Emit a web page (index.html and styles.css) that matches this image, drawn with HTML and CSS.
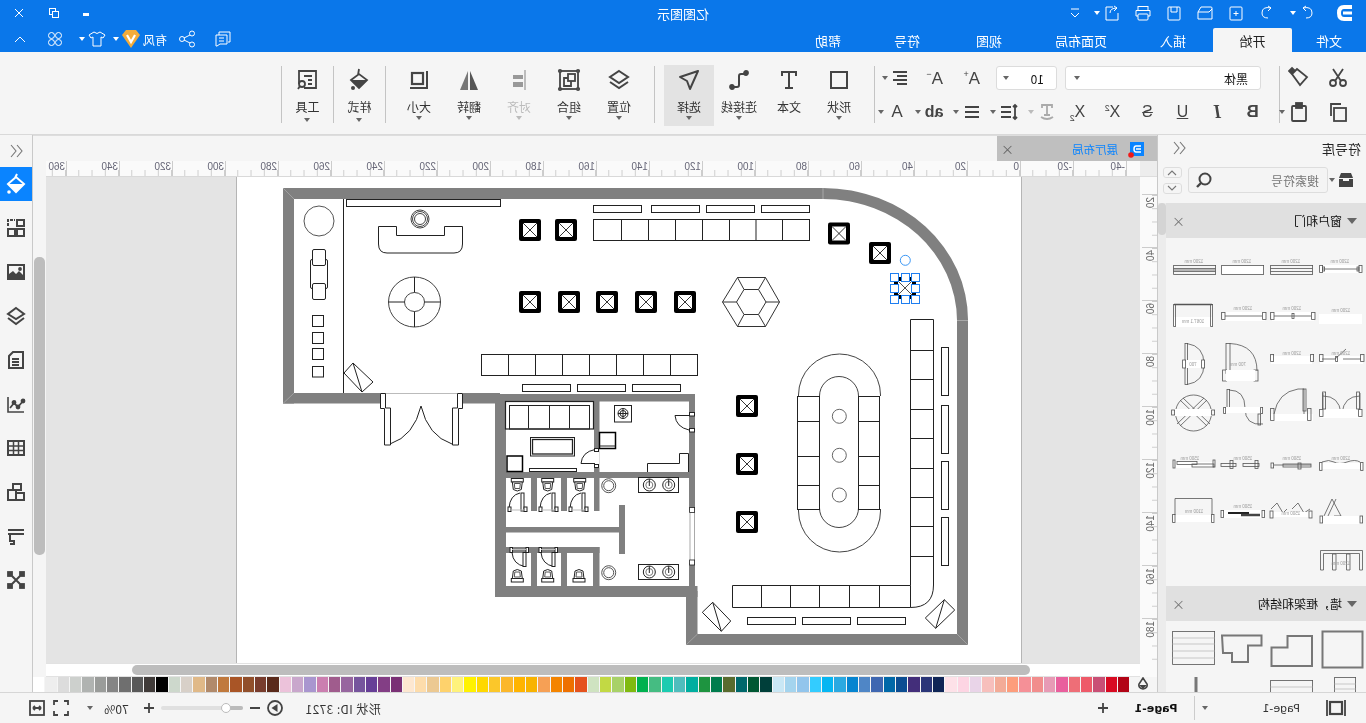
FILE: index.html
```html
<!DOCTYPE html>
<html lang="zh">
<head>
<meta charset="utf-8">
<title>亿图图示</title>
<link rel="stylesheet" href="styles.css">
</head>
<body>
<div class="app">

<header class="titlebar">
  <div class="qa">
    <svg class="ico logo" width="22" height="22" viewBox="0 0 22 22"><path d="M18 3H10Q3 3 3 11T10 19H18V15H10Q7 15 7 11T10 7H18Z" fill="#fff"/><rect x="9" y="9.500" width="9" height="3" fill="#fff"/></svg>
    <svg class="ico wh a1" width="16" height="16" viewBox="0 0 16 16"><path d="M4 3Q13 1 13 8Q13 13 7 13M4 3L7 1M4 3L7 6"/></svg>
    <i class="caret w"></i>
    <svg class="ico wh a2" width="16" height="16" viewBox="0 0 16 16"><path d="M12 3Q3 1 3 8Q3 13 9 13M12 3L9 1M12 3L9 6"/></svg>
    <svg class="ico wh a3" width="16" height="16" viewBox="0 0 16 16"><rect x="2" y="2" width="12" height="13" rx="1"/><path d="M5.500 8.500H10.500M8 6V11"/></svg>
    <svg class="ico wh a3" width="16" height="16" viewBox="0 0 16 16"><path d="M1 14V7L4 2H14Q15 2 15 3V14ZM1 7H12L15 4"/></svg>
    <svg class="ico wh a3" width="16" height="16" viewBox="0 0 16 16"><rect x="2" y="2" width="12" height="13" rx="1"/><path d="M5 2V7H11V2"/></svg>
    <svg class="ico wh a3" width="16" height="16" viewBox="0 0 16 16"><rect x="3" y="1.500" width="10" height="4"/><path d="M3 11H1V5.500H15V11H13"/><rect x="3" y="9" width="10" height="6" rx="1"/></svg>
    <svg class="ico wh a3" width="16" height="16" viewBox="0 0 16 16"><path d="M9 2H2V15H14V8M6 8Q6 3 13 3M13 3L10 1M13 3L10 6"/></svg>
    <i class="caret w"></i>
    <svg class="ico wh a4" width="14" height="14" viewBox="0 0 14 14"><path d="M3 3H11M3 7L7 11L11 7"/></svg>
  </div>
  <div class="apptitle">亿图图示</div>
  <div class="winctl">
    <span class="minbtn"></span>
    <svg class="ico wh" width="12" height="12" viewBox="0 0 12 12"><rect x="1.500" y="1.500" width="6" height="6"/><rect x="4.500" y="4.500" width="6" height="6" fill="#0a77ea"/></svg>
    <svg class="ico wh" width="12" height="12" viewBox="0 0 12 12"><path d="M2 2L10 10M10 2L2 10"/></svg>
  </div>
</header>

<nav class="menubar">
  <a class="tab t74">文件</a>
  <a class="tab t79 on">开始</a>
  <a class="tab t80">插入</a>
  <a class="tab t104">页面布局</a>
  <a class="tab t80">视图</a>
  <a class="tab t84">符号</a>
  <a class="tab t74">帮助</a>
  <div class="menuright">
    <svg class="ico wh" width="18" height="18" viewBox="0 0 18 18"><path d="M5 5V2H16V12H14M2 5H13V14H6L3 16H2Z"/><path d="M5 8H10M5 11H10"/></svg>
    <svg class="ico wh m1" width="18" height="18" viewBox="0 0 18 18"><circle cx="4" cy="9" r="2.500"/><circle cx="14" cy="3.500" r="2.500"/><circle cx="14" cy="14.500" r="2.500"/><path d="M6 8L12 5M6 10L12 13"/></svg>
    <span class="vipname">有风</span>
    <svg class="ico gem" width="20" height="20" viewBox="0 0 20 20"><path d="M1 6L5 1H15L19 6L10 19Z" fill="#f4ac3a"/><path d="M6 6L10 13L14 6" fill="none" stroke="#fff" stroke-width="2.200"/></svg>
    <i class="caret w m2"></i>
    <svg class="ico wh m3" width="18" height="18" viewBox="0 0 18 18"><path d="M6 2L1 5L3 8L5 7V16H13V7L15 8L17 5L12 2Q9 5 6 2Z"/></svg>
    <i class="caret w m4"></i>
    <svg class="ico wh m5" width="16" height="16" viewBox="0 0 16 16"><circle cx="4.500" cy="4.500" r="3"/><circle cx="11.500" cy="4.500" r="3"/><circle cx="4.500" cy="11.500" r="3"/><circle cx="11.500" cy="11.500" r="3"/></svg>
    <svg class="ico wh m6" width="14" height="14" viewBox="0 0 14 14"><path d="M2 10L7 5L12 10"/></svg>
  </div>
</nav>

<section class="ribbon">
  <div class="grp clip">
    <svg class="ico dk" width="22" height="22" viewBox="0 0 22 22"><circle cx="6" cy="17" r="3"/><circle cx="16" cy="17" r="3"/><path d="M8 15L16 3M14 15L6 3"/></svg>
    <svg class="ico dk" width="22" height="22" viewBox="0 0 22 22"><path d="M4 8L9 3L19 11L12 19Z"/><path d="M4 8L1 5L4 2L7 5" fill="#444"/></svg>
    <svg class="ico dk" width="22" height="22" viewBox="0 0 22 22"><rect x="7" y="7" width="12" height="13"/><path d="M4 15V3H14"/></svg>
    <div class="pastecell">
      <svg class="ico dk" width="22" height="22" viewBox="0 0 22 22"><rect x="4" y="5" width="14" height="15" rx="1"/><rect x="8" y="2" width="6" height="5" fill="#444"/></svg>
      <i class="caret"></i>
    </div>
  </div>

  <div class="grp font">
    <div class="frow">
      <div class="select fontsel"><span>黑体</span><i class="caret"></i></div>
      <div class="select sizesel"><span>10</span><i class="caret"></i></div>
      <span class="glyph big p1">A<sup>+</sup></span>
      <span class="glyph big p2">A<sup>−</sup></span>
      <svg class="ico dk p3" width="18" height="18" viewBox="0 0 18 18"><path d="M2 3H16M6 7H16M2 11H16M6 15H16"/></svg>
      <i class="caret p4"></i>
    </div>
    <div class="frow second">
      <span class="fi"><b class="glyph bold">B</b></span>
      <span class="fi"><em class="glyph ital">I</em></span>
      <span class="fi"><span class="glyph under">U</span></span>
      <span class="fi"><span class="glyph strike">S</span></span>
      <span class="fi"><span class="glyph">X<sup>2</sup></span></span>
      <span class="fi"><span class="glyph">X<sub>2</sub></span></span>
      <span class="fc"><svg class="ico lt" width="18" height="18" viewBox="0 0 18 18"><path d="M4 5V2H14V5M9 2V12M6 12H12M3 14Q9 18 15 14"/></svg><i class="caret lt2"></i></span>
      <span class="fc"><svg class="ico dk" width="18" height="18" viewBox="0 0 18 18"><path d="M1 4H11M1 9H11M1 14H11M15 2V16M13 4L15 2L17 4M13 14L15 16L17 14"/></svg><i class="caret"></i></span>
      <span class="fc"><svg class="ico dk" width="18" height="18" viewBox="0 0 18 18"><path d="M2 4H16M2 9H16M2 14H16"/></svg><i class="caret"></i></span>
      <span class="fc"><span class="glyph ab">ab</span><i class="caret"></i></span>
      <span class="fc"><span class="glyph big ac">A</span><i class="caret"></i></span>
    </div>
  </div>

  <div class="grp tools">
    <div class="tool"><svg class="ico dk" width="24" height="24" viewBox="0 0 24 24"><rect x="4" y="4" width="16" height="16" stroke-width="2"/></svg><span>形状</span><i class="caret"></i></div>
    <div class="tool"><svg class="ico dk" width="24" height="24" viewBox="0 0 24 24"><path d="M5 8V4H19V8M12 4V20M8 20H16" stroke-width="2"/></svg><span>文本</span></div>
    <div class="tool"><svg class="ico dk" width="24" height="24" viewBox="0 0 24 24"><path d="M6 19H10Q12 19 12 17V8Q12 6 14 6H17" stroke-width="2"/><circle cx="5" cy="19" r="2" fill="#444"/><circle cx="19" cy="5" r="2" fill="#444"/></svg><span>连接线</span><i class="caret"></i></div>
    <div class="tool active"><svg class="ico dk" width="24" height="24" viewBox="0 0 24 24"><path d="M21 3L3 9L10 13L13 21Z" stroke-width="2" stroke-linejoin="round"/></svg><span>选择</span><i class="caret"></i></div>
  </div>

  <div class="grp tools second-tools">
    <div class="tool"><svg class="ico dk" width="24" height="24" viewBox="0 0 24 24"><path d="M12 3L21 9L12 15L3 9Z" stroke-width="2"/><path d="M3 14L12 20L21 14" stroke-width="2"/></svg><span>位置</span><i class="caret"></i></div>
    <div class="tool"><svg class="ico dk" width="24" height="24" viewBox="0 0 24 24"><rect x="3" y="3" width="18" height="18"/><rect x="11" y="6" width="7" height="7"/><path d="M11 10H7V18H14V13"/><circle cx="3" cy="3" r="1.200" fill="#fff"/><circle cx="21" cy="3" r="1.200" fill="#fff"/><circle cx="3" cy="21" r="1.200" fill="#fff"/><circle cx="21" cy="21" r="1.200" fill="#fff"/></svg><span>组合</span><i class="caret"></i></div>
    <div class="tool off"><svg class="ico" width="24" height="24" viewBox="0 0 24 24"><path d="M18 2V22" stroke="#aaa" stroke-width="1.500"/><rect x="6" y="7" width="10" height="4" fill="#999"/><rect x="6" y="14" width="10" height="5" fill="#999"/></svg><span>对齐</span><i class="caret lt2"></i></div>
    <div class="tool"><svg class="ico" width="24" height="24" viewBox="0 0 24 24"><path d="M11 3V22H3Z" fill="#777"/><path d="M13 3V22H21Z" fill="#555"/></svg><span>翻转</span><i class="caret"></i></div>
    <div class="tool"><svg class="ico dk" width="24" height="24" viewBox="0 0 24 24"><rect x="5" y="5" width="11" height="11" stroke-width="2.200"/><path d="M20 3V20H3" stroke-width="2"/></svg><span>大小</span><i class="caret"></i></div>
  </div>

  <div class="grp single">
    <div class="tool"><svg class="ico" width="24" height="24" viewBox="0 0 24 24"><path d="M12 1L11 7M4 12L12 6L20 12L12 20Z" fill="none" stroke="#444" stroke-width="1.800"/><path d="M4 12H20L12 20Z" fill="#444"/><circle cx="6" cy="20" r="2" fill="#444"/></svg><span>样式</span><i class="caret"></i></div>
  </div>
  <div class="grp single">
    <div class="tool"><svg class="ico dk" width="24" height="24" viewBox="0 0 24 24"><path d="M4 16V3H21V20H9"/><path d="M9 8H17M13 12H17M13 16H17"/><circle cx="7" cy="16" r="3"/><path d="M5 18L3 21"/></svg><span>工具</span><i class="caret"></i></div>
  </div>
</section>

<main class="main">

  <aside class="panel">
    <div class="panelhead">
      <span class="paneltitle">符号库</span>
      <svg class="ico dim-i" width="14" height="14" viewBox="0 0 14 14"><path d="M8 1L13 7L8 13M2 1L7 7L2 13"/></svg>
    </div>
    <div class="searchrow">
      <svg class="ico" width="16" height="14" viewBox="0 0 16 14"><path d="M3 0H13L15 5H1Z" fill="#444"/><path d="M1 6H5V8H11V6H15V14H1Z" fill="#444"/></svg>
      <i class="caret s1"></i>
      <div class="searchbox"><span>搜索符号</span>
        <svg class="ico dk" width="18" height="18" viewBox="0 0 18 18"><circle cx="10" cy="8" r="5.500" stroke-width="2"/><path d="M6 12L2 16" stroke-width="2.400"/></svg>
      </div>
      <div class="updown">
        <button class="ub"><svg width="12" height="7" viewBox="0 0 12 7" class="ico dim-i"><path d="M2 6L6 2L10 6"/></svg></button>
        <button class="ub"><svg width="12" height="7" viewBox="0 0 12 7" class="ico dim-i"><path d="M2 1L6 5L10 1"/></svg></button>
      </div>
    </div>
    <div class="libwrap">
      <div class="libs">
        <div class="libhead"><i class="tri"></i><span>窗户和门</span><em class="libx">×</em></div>
        <div class="libgrid">
          <svg class="ico sh" width="49" height="48" viewBox="0 0 49 48"><rect x="3" y="21" width="42" height="8" fill="#fff" stroke="none"/><path d="M6 25H42"/><rect x="2.500" y="21.500" width="3" height="7"/><rect x="5.500" y="23" width="2" height="4"/><rect x="42" y="21.500" width="3" height="7"/><rect x="40" y="23" width="2" height="4"/><text class="dimt" transform="translate(23,19) scale(-1,1)">1200 mm</text></svg>
          <svg class="ico sh" width="49" height="48" viewBox="0 0 49 48"><rect x="2.500" y="21.500" width="42" height="9"/><path d="M2.500 24.500H44.500M2.500 27.500H44.500"/><text class="dimt" transform="translate(23,19) scale(-1,1)">1200 mm</text></svg>
          <svg class="ico sh" width="49" height="48" viewBox="0 0 49 48"><rect x="2.500" y="21.500" width="42" height="9" fill="#fff"/><text class="dimt" transform="translate(23,19) scale(-1,1)">1200 mm</text></svg>
          <svg class="ico sh" width="49" height="48" viewBox="0 0 49 48"><rect x="3.500" y="21.500" width="42" height="9"/><path d="M3.500 24.500H45.500M3.500 26H45.500M3.500 27.500H45.500"/><text class="dimt" transform="translate(24,19) scale(-1,1)">1200 mm</text></svg>

          <svg class="ico sh" width="49" height="48" viewBox="0 0 49 48"><rect x="2" y="22" width="43" height="10" fill="#fff" stroke="none"/><text class="dimt" transform="translate(24,20) scale(-1,1)">1200 mm</text></svg>
          <svg class="ico sh" width="49" height="48" viewBox="0 0 49 48"><rect x="4" y="20" width="42" height="9" fill="#fff" stroke="none"/><path d="M6 24H43"/><rect x="2.500" y="20.500" width="3.500" height="7"/><rect x="24" y="21.500" width="2" height="5"/><rect x="43.500" y="20.500" width="3.500" height="7"/><text class="dimt" transform="translate(24,18) scale(-1,1)">1200 mm</text></svg>
          <svg class="ico sh" width="49" height="48" viewBox="0 0 49 48"><rect x="4" y="20" width="42" height="9" fill="#fff" stroke="none"/><path d="M6 24H43"/><rect x="2.500" y="20.500" width="3.500" height="7"/><rect x="43.500" y="20.500" width="3.500" height="7"/><text class="dimt" transform="translate(24,18) scale(-1,1)">1200 mm</text></svg>
          <svg class="ico sh" width="49" height="48" viewBox="0 0 49 48"><rect x="4" y="25" width="38" height="10" fill="#fff" stroke="none"/><path d="M4 12.500H42" stroke-width="1.500"/><rect x="3.500" y="12.500" width="2" height="22"/><rect x="40.500" y="12.500" width="2" height="22"/><text class="dimt" transform="translate(23,31) scale(-1,1)">1067.1 mm</text></svg>

          <svg class="ico sh" width="49" height="48" viewBox="0 0 49 48"><rect x="3" y="16" width="43" height="8" fill="#fff" stroke="none"/><path d="M5 19H18L29 9M26 19H44"/><rect x="2.500" y="14.500" width="3.500" height="7"/><rect x="18.500" y="16.500" width="2" height="5"/><rect x="43.500" y="14.500" width="3.500" height="7"/><text class="dimt" transform="translate(24,15) scale(-1,1)">1200 mm</text></svg>
          <svg class="ico sh" width="49" height="48" viewBox="0 0 49 48"><rect x="3" y="16" width="41" height="8" fill="#fff" stroke="none"/><rect x="2.500" y="14.500" width="3" height="7"/><rect x="42.500" y="14.500" width="3" height="7"/><text class="dimt" transform="translate(24,15) scale(-1,1)">1200 mm</text></svg>
          <svg class="ico sh" width="49" height="48" viewBox="0 0 49 48"><rect x="7" y="3.500" width="4" height="30"/><path d="M11 3.500Q38 5 38 31"/><rect x="3.500" y="30" width="4" height="11"/><rect x="35" y="30" width="4" height="11"/><rect x="7" y="30" width="29" height="11" fill="#fff" stroke="none"/><text class="dimt" transform="translate(19,26) scale(-1,1)">700 mm</text></svg>
          <svg class="ico sh" width="49" height="48" viewBox="0 0 49 48"><rect x="15" y="3.500" width="2.500" height="41"/><path d="M17 3.500Q34 6 34 24T17 44.500"/><rect x="12" y="20" width="22" height="8" fill="#fff" stroke="none"/><rect x="12.500" y="20" width="3" height="8"/><rect x="31.500" y="20" width="3" height="8"/><text class="dimt" transform="translate(23,26) scale(-1,1)">700</text></svg>

          <svg class="ico sh" width="49" height="48" viewBox="0 0 49 48"><path d="M6 5V23M43 5V23M6 8Q22 8 24 25M43 8Q27 8 25 25"/><rect x="3" y="21" width="42" height="9" fill="#fff" stroke="none"/><rect x="2.500" y="21.500" width="3.500" height="7"/><rect x="41.500" y="21.500" width="3.500" height="7"/><rect x="5.500" y="4" width="3" height="17"/><rect x="39.500" y="4" width="3" height="17"/></svg>
          <svg class="ico sh" width="49" height="48" viewBox="0 0 49 48"><path d="M6 26Q10 4 30 1H36V31"/><rect x="3" y="26" width="42" height="7" fill="#fff" stroke="none"/><rect x="2.500" y="20.500" width="3.500" height="12"/><rect x="39.500" y="20.500" width="3.500" height="12"/><rect x="35" y="1" width="3" height="22"/></svg>
          <svg class="ico sh" width="49" height="48" viewBox="0 0 49 48"><rect x="8" y="1.500" width="2.500" height="19"/><path d="M10 2Q26 2 26 20T44 36"/><rect x="4" y="19" width="40" height="6" fill="#fff" stroke="none"/><rect x="4.500" y="19.500" width="2" height="6"/><rect x="41.500" y="19.500" width="2" height="6"/><rect x="39" y="26" width="2.500" height="11"/></svg>
          <svg class="ico sh" width="49" height="48" viewBox="0 0 49 48"><circle cx="23.500" cy="25" r="18"/><path d="M10 12L37 38M37 12L10 38M13 10L40 36M34 10L7 36"/><rect x="4" y="21" width="38" height="7" fill="#fff" stroke="none"/><rect x="1.500" y="22" width="3" height="5"/><rect x="41.500" y="22" width="3" height="5"/></svg>

          <svg class="ico sh" width="49" height="48" viewBox="0 0 49 48"><g transform="translate(0 13)"><path d="M5 13Q12 10 17 13T30 13T43 13"/><rect x="3" y="14" width="43" height="6" fill="#fff" stroke="none"/><rect x="2.500" y="13.500" width="2.500" height="8"/><rect x="43.500" y="13.500" width="2.500" height="8"/><text class="dimt" transform="translate(24,11) scale(-1,1)">1200 mm</text></g></svg>
          <svg class="ico sh" width="49" height="48" viewBox="0 0 49 48"><g transform="translate(0 13)"><path d="M6 16H43"/><rect x="3" y="14" width="2.500" height="5"/><rect x="30" y="14" width="3" height="6"/><rect x="15" y="15" width="28" height="3"/><text class="dimt" transform="translate(24,11) scale(-1,1)">1500 mm</text></g></svg>
          <svg class="ico sh" width="49" height="48" viewBox="0 0 49 48"><g transform="translate(0 13)"><rect x="2" y="14.500" width="15" height="3"/><rect x="24" y="14.500" width="16" height="3"/><rect x="36" y="11.500" width="3" height="8"/><rect x="11" y="11.500" width="3" height="8"/><text class="dimt" transform="translate(24,11) scale(-1,1)">1500 mm</text></g></svg>
          <svg class="ico sh" width="49" height="48" viewBox="0 0 49 48"><g transform="translate(0 13)"><rect x="6" y="13" width="38" height="6" fill="#fff" stroke="none"/><rect x="7" y="12.500" width="20" height="3"/><rect x="22" y="15" width="22" height="3"/><rect x="3" y="11" width="2" height="8"/><rect x="43" y="11" width="2" height="7"/><text class="dimt" transform="translate(20,11) scale(-1,1)">1500 mm</text></g></svg>

          <svg class="ico sh" width="49" height="48" viewBox="0 0 49 48"><g transform="translate(0 6)"><path d="M7 26L15 9L24 26L17 26M11 26L19 9"/><rect x="3" y="26" width="43" height="8" fill="#fff" stroke="none"/><rect x="3" y="26" width="2.500" height="7"/><rect x="43" y="26" width="2.500" height="7"/></g></svg>
          <svg class="ico sh" width="49" height="48" viewBox="0 0 49 48"><g transform="translate(0 7)"><path d="M3 18L9 12L15 22L19 18M24 18L30 12L36 22L42 18"/><rect x="3" y="21" width="42" height="5" fill="#fff" stroke="none"/><rect x="2" y="20" width="3" height="7"/><rect x="41" y="20" width="3" height="7"/><text class="dimt" transform="translate(23,24) scale(-1,1)">1500 mm</text></g></svg>
          <svg class="ico sh" width="49" height="48" viewBox="0 0 49 48"><g transform="translate(0 7)"><rect x="3" y="19" width="43" height="8" fill="#fff" stroke="none"/><path d="M9 22H30" stroke="#222" stroke-width="2"/><path d="M22 24H41" stroke="#444" stroke-width="2.500"/><rect x="2" y="19.500" width="2.500" height="7"/><rect x="43" y="19.500" width="2.500" height="7"/><text class="dimt" transform="translate(24,17) scale(-1,1)">1500 mm</text></g></svg>
          <svg class="ico sh" width="49" height="48" viewBox="0 0 49 48"><g transform="translate(0 7)"><path d="M5 24V7.500H42V24"/><rect x="3" y="24" width="42" height="7" fill="#fff" stroke="none"/><rect x="2.500" y="23.500" width="2.500" height="8"/><rect x="41.500" y="23.500" width="2.500" height="8"/><text class="dimt" transform="translate(24,22) scale(-1,1)">1100 mm</text></g></svg>

          <svg class="ico sh" width="49" height="48" viewBox="0 0 49 48"><path d="M3.500 38V18.500H45.500V38H42.500V21.500H6.500V38ZM15.500 38V22H19V38ZM29.500 38V22H33V38Z"/><text class="dimt" transform="translate(24,33) scale(-1,1)">1200 mm</text></svg>
          <span class="empty"></span><span class="empty"></span><span class="empty"></span>
        </div>

        <div class="libhead"><i class="tri"></i><span>墙，框架和结构</span><em class="libx">×</em></div>
        <div class="libgrid g2">
          <svg class="ico sh" width="49" height="48" viewBox="0 0 49 48"><rect x="5.500" y="2.500" width="40" height="36" stroke="#777" stroke-width="2"/></svg>
          <svg class="ico sh" width="49" height="48" viewBox="0 0 49 48"><path d="M3.500 26.500V37H44V7H19.500V18.500H3.500Z" stroke="#777" stroke-width="2"/></svg>
          <svg class="ico sh" width="49" height="48" viewBox="0 0 49 48"><path d="M3 6.500H42.500V16.500H29V33H13V24H4Z" stroke="#777" stroke-width="2"/></svg>
          <svg class="ico sh" width="49" height="48" viewBox="0 0 49 48"><rect x="2.500" y="2.500" width="42" height="33" fill="none"/><path d="M2.500 9H44.500M2.500 15H44.500M2.500 22H44.500M2.500 29H44.500" stroke="#bbb"/></svg>

          <svg class="ico sh" width="49" height="48" viewBox="0 0 49 48"><rect x="17.500" y="0.500" width="21" height="30"/><path d="M17.500 7H38.500M17.500 12H38.500" stroke="#bbb"/></svg>
          <svg class="ico sh" width="49" height="48" viewBox="0 0 49 48"><rect x="2.500" y="3.500" width="42" height="30"/><path d="M2.500 10H44.500M2.500 16H44.500" stroke="#bbb"/></svg>
          <span class="empty"></span>
          <svg class="ico sh" width="49" height="48" viewBox="0 0 49 48"><path d="M26 0V20" stroke="#777" stroke-width="3"/></svg>
        </div>
      </div>
      <div class="libscroll"><span></span></div>
    </div>
  </aside>

  <div class="center">
    <div class="tabstrip">
      <div class="doctab">
        <svg class="ico" width="18" height="18" viewBox="0 0 18 18"><rect x="3" y="2" width="14" height="14" fill="#0a84ff"/><path d="M14 6H9Q7 6 7 9T9 12H14M9 9H14" fill="none" stroke="#fff" stroke-width="1.500"/><circle cx="4" cy="15" r="2.800" fill="#f01818"/></svg>
        <span>展厅布局</span>
        <em class="docx">×</em>
      </div>
    </div>

    <div class="work">
      <div class="vruler">
        <div class="corner"></div>
        <div class="vticks">
          <span>20</span><span>40</span><span>60</span><span>80</span><span>100</span><span>120</span><span>140</span><span>160</span><span>180</span>
        </div>
      </div>
      <div class="mid">
        <div class="hruler">
          <span>-40</span><span>-20</span><span>0</span><span>20</span><span>40</span><span>60</span><span>80</span><span>100</span><span>120</span><span>140</span><span>160</span><span>180</span><span>200</span><span>220</span><span>240</span><span>260</span><span>280</span><span>300</span><span>320</span><span>340</span><span>360</span>
        </div>
        <div class="canvas">
          <div class="page">
            <svg class="plan" width="784" height="486" viewBox="0 0 784 486">
              <defs>
                <g id="col"><rect x="-11" y="-11" width="22" height="22" rx="2" fill="#000"/><rect x="-7" y="-7" width="14" height="14" fill="#fff"/><path d="M-7 -7L7 7M7 -7L-7 7" stroke="#000" stroke-width=".8"/></g>
                <g id="wc" fill="#fff" stroke="#222"><rect x="-6" y="0" width="12" height="3.500"/><path d="M-5 3.500H5L4 11Q0 14 -4 11Z"/><path d="M-3 5H3L2.500 10H-2.500Z" stroke="#555"/></g>
                <g id="sdoor" fill="none" stroke="#222"><path d="M0 15Q1 2 11 0"/><rect x="12" y="0" width="3" height="18" fill="#fff"/><rect x="-1" y="14" width="3" height="4.500" fill="#fff"/><rect x="15" y="14" width="3" height="4.500" fill="#fff"/><path d="M2 17H15" stroke="#bbb"/></g>
                <g id="ldoor" fill="none" stroke="#222"><path d="M2 5Q3 17 15 19"/><rect x="13" y="5" width="3" height="14" fill="#fff"/><rect x="0" y="0" width="2.500" height="5" fill="#fff"/><rect x="16" y="0" width="2.500" height="5" fill="#fff"/><path d="M2 2H16" stroke="#bbb"/></g>
                <g id="ring" fill="#fff" stroke="#555"><circle r="7"/><circle r="5"/></g>
                <g id="tap" fill="#fff" stroke="#222"><circle r="6"/><circle r="3.500" stroke="#777"/><path d="M0 -6V1"/></g>
              </defs>
              <g transform="translate(784 0) scale(-1 1) translate(-237 -177)">
                <g fill="#808080">
                  <rect x="283" y="188" width="540" height="11"/>
                  <rect x="283" y="188" width="11" height="215.500"/>
                  <rect x="283" y="393" width="97" height="10.500"/>
                  <rect x="463" y="393" width="37" height="10.500"/>
                  <path d="M823 188A145 132 0 0 1 968 320.500H957A134 122 0 0 0 823 199Z"/>
                  <rect x="957" y="320" width="11" height="325"/>
                  <rect x="686" y="634" width="282" height="11"/>
                  <rect x="686" y="591" width="11.500" height="54"/>
                  <rect x="495" y="394" width="11" height="203"/>
                  <rect x="495" y="394" width="200" height="7.500"/>
                  <rect x="689" y="394" width="6" height="203"/>
                  <rect x="495" y="586" width="202.500" height="11"/>
                  <rect x="594" y="401" width="5.500" height="110"/>
                  <rect x="506" y="472" width="183" height="6"/>
                  <rect x="531" y="478" width="6" height="33"/>
                  <rect x="561" y="478" width="6" height="33"/>
                  <rect x="506" y="527" width="114" height="5.500"/>
                  <rect x="619" y="505" width="6" height="49"/>
                  <rect x="506" y="547" width="93.500" height="6"/>
                  <rect x="531" y="553" width="6" height="33"/>
                  <rect x="561" y="553" width="6" height="33"/>
                  <rect x="593" y="547" width="6.500" height="39"/>
                </g>
                <path d="M823 188V199M957 320.500H968" stroke="#a8a8a8"/>
                <path d="M283 188L294 199M283 403.500L294 393M968 645L957 634M686 645L697.500 634" stroke="#a0a0a0"/>
                <rect x="594" y="448" width="5.500" height="20" fill="#fff"/>
                <rect x="689" y="510" width="6" height="53" fill="#fff"/>
                <path d="M690 510V563M694.500 510V563" stroke="#aaa"/>
                <g fill="#fff" stroke="#222" stroke-width=".8">
                  <rect x="689.500" y="507.500" width="5" height="5"/><rect x="689.500" y="560" width="5" height="5"/>
                </g>

                <g fill="none" stroke="#222" stroke-width="1">
                  <path d="M343.500 199V393"/>
                  <rect x="346.500" y="199.500" width="154" height="7"/>
                  <circle cx="319" cy="221" r="15" stroke="#555"/>
                  <rect x="310.500" y="259.500" width="17" height="29" rx="1.500"/>
                  <rect x="312.500" y="249.500" width="13" height="16" rx="1.500" fill="#fff"/>
                  <rect x="312.500" y="283.500" width="13" height="16" rx="1.500" fill="#fff"/>
                  <rect x="312.500" y="315.500" width="11" height="11"/>
                  <rect x="312.500" y="332.500" width="11" height="11"/>
                  <rect x="312.500" y="348.500" width="11" height="11"/>
                  <rect x="312.500" y="366.500" width="11" height="10.500"/>
                  <path d="M353 363L373 382L362 392L344 373ZM353 363L362 392"/>
                  <path d="M378.500 226.500H396.500V235.500H444.500V226.500H462.500V244Q462.500 253 454 253H387Q378.500 253 378.500 244Z"/>
                  <circle cx="420" cy="219" r="9" stroke="#444"/><circle cx="420" cy="219" r="7.500" stroke="#444"/><circle cx="420" cy="219" r="5.500" stroke="#444"/>
                  <ellipse cx="414.500" cy="302" rx="26" ry="25" stroke="#444"/>
                  <ellipse cx="414.500" cy="302" rx="10" ry="9.500" stroke="#444"/>
                  <path d="M414.500 277V292.500M414.500 311.500V327M388.500 302H404.500M424.500 302H440.500"/>

                  <rect x="481.500" y="354.500" width="216" height="21"/>
                  <path d="M508.500 354.500V375.500M535.500 354.500V375.500M562.500 354.500V375.500M589.500 354.500V375.500M616.500 354.500V375.500M643.500 354.500V375.500M670.500 354.500V375.500"/>
                  <rect x="522.500" y="384.500" width="48" height="7"/><rect x="577.500" y="384.500" width="48" height="7"/><rect x="632.500" y="384.500" width="48" height="7"/>
                  <rect x="593.500" y="219.500" width="216" height="21"/>
                  <path d="M621.500 219.500V240.500M648.500 219.500V240.500M675.500 219.500V240.500M702.500 219.500V240.500M729.500 219.500V240.500M756 219.500V240.500M782.500 219.500V240.500"/>
                  <rect x="593.500" y="205.500" width="48" height="7"/><rect x="651.500" y="205.500" width="48" height="7"/><rect x="706.500" y="205.500" width="48" height="7"/><rect x="761.500" y="205.500" width="48" height="7"/>
                  <path d="M722.500 302L737.500 277.500H765.500L779.500 302L765.500 326.500H737.500ZM736.500 302L744 289.500H758.500L766 302L758.500 314.500H744ZM722.500 302H736.500M737.500 277.500L744 289.500M765.500 277.500L758.500 289.500M779.500 302H766M765.500 326.500L758.500 314.500M737.500 326.500L744 314.500" stroke="#333"/>

                  <path d="M910.500 319.500H933.500V585Q933.500 607.500 910.500 607.500H732.500V585.500H910.500Z"/>
                  <path d="M910.500 350.500H933.500M910.500 379.500H933.500M910.500 409.500H933.500M910.500 438.500H933.500M910.500 468.500H933.500M910.500 497.500H933.500M910.500 526.500H933.500M910.500 556.500H933.500M761.500 585.500V607.500M790.500 585.500V607.500M819.500 585.500V607.500M849.500 585.500V607.500M879.500 585.500V607.500M910.500 585.500V607.500"/>
                  <rect x="941.500" y="347.500" width="7" height="48"/><rect x="941.500" y="405.500" width="7" height="48"/><rect x="941.500" y="461.500" width="7" height="48"/><rect x="941.500" y="517.500" width="7" height="48"/>
                  <rect x="747.500" y="617.500" width="48" height="7"/><rect x="802.500" y="617.500" width="48" height="7"/><rect x="857.500" y="617.500" width="48" height="7"/>
                  <path d="M712.700 602.300L730.700 621L721.300 631.300L702.300 612.300ZM712.700 602.300L721.300 631.300"/>
                  <path d="M944.300 599.700L954.700 610L935.700 628.300L925.300 618ZM944.300 599.700L935.700 628.300"/>

                  <path d="M798.500 396V395A41 41 0 0 1 880.500 395V396M798.500 509V511A41 41 0 0 0 880.500 511V509" stroke="#444"/>
                  <path d="M819.500 396A19.500 19.500 0 0 1 858.500 396V508A19.500 19.500 0 0 1 819.500 508Z" stroke="#444"/>
                  <rect x="797.500" y="396.500" width="22" height="113"/>
                  <rect x="858.500" y="396.500" width="21" height="113"/>
                  <path d="M797.500 421.500H819.500M797.500 456.500H819.500M797.500 485.500H819.500M858.500 421.500H879.500M858.500 456.500H879.500M858.500 485.500H879.500"/>
                  <circle cx="839.300" cy="416.300" r="7" stroke="#666"/><circle cx="839.300" cy="455.300" r="7" stroke="#666"/><circle cx="839.300" cy="495" r="7" stroke="#666"/>

                  <rect x="505.500" y="401.500" width="88" height="27.500" stroke-width="1.200"/>
                  <rect x="509.500" y="405.500" width="80" height="23.500"/>
                  <path d="M528.500 405.500V428.500M549.500 405.500V428.500M569.500 405.500V428.500"/>
                  <rect x="530.500" y="437.500" width="44" height="18.500"/><rect x="532.500" y="439.500" width="40" height="14.500" stroke-width="1.300"/>
                  <rect x="507" y="456" width="15.500" height="15.500" stroke="#000" stroke-width="1.500"/>
                  <rect x="599.500" y="432.500" width="16" height="16" stroke="#000" stroke-width="1.500"/>
                  <path d="M599.500 446H615.500"/>
                  <rect x="529.500" y="468.500" width="47" height="3"/>
                  <path d="M581 463.500Q582 452 595 449.500M581 463.500H595"/>
                  <rect x="594.500" y="448.500" width="4" height="3"/><rect x="594.500" y="464.500" width="4" height="3"/>
                  <rect x="614.500" y="405.500" width="17" height="16.500"/>
                  <circle cx="623" cy="413.500" r="5"/><circle cx="623" cy="413.500" r="3"/><path d="M618 413.500H628M623 408.500V418.500"/>
                  <path d="M675 415.500H689M675 415.500Q676 427 689 430"/>
                  <rect x="689.500" y="412.500" width="5" height="3.500" fill="#fff"/><rect x="689.500" y="428.500" width="5" height="3.500" fill="#fff"/>
                  <path d="M647.500 472V463.500H679.500V453.500H688.500V472"/>
                  <rect x="638.500" y="477.500" width="40" height="15"/><rect x="638.500" y="564.500" width="40" height="15"/>
                </g>
                <use href="#col" x="530" y="230"/><use href="#col" x="566" y="230"/>
                <use href="#col" x="530" y="302"/><use href="#col" x="569" y="302"/><use href="#col" x="607" y="302"/><use href="#col" x="646" y="302"/><use href="#col" x="685" y="302"/>
                <use href="#col" x="839" y="233.500"/><use href="#col" x="880" y="253"/>
                <use href="#col" x="747" y="406"/><use href="#col" x="747" y="464"/><use href="#col" x="747" y="522"/>
                <use href="#ring" x="608.700" y="485.700"/><use href="#ring" x="608.700" y="572.700"/>
                <use href="#tap" x="649.300" y="485"/><use href="#tap" x="668.700" y="485"/><use href="#tap" x="649.300" y="572"/><use href="#tap" x="668.700" y="572"/>
                <use href="#wc" x="517.300" y="478.500"/><use href="#wc" x="547.700" y="478.500"/><use href="#wc" x="579.700" y="478.500"/>
                <g transform="translate(0 1060) scale(1 -1)"><use href="#wc" x="517.300" y="478"/><use href="#wc" x="547.700" y="478"/><use href="#wc" x="579" y="478"/></g>
                <use href="#sdoor" x="509" y="493"/><use href="#sdoor" x="540" y="493"/><use href="#sdoor" x="570" y="493"/>
                <use href="#ldoor" x="510" y="547.500"/><use href="#ldoor" x="539" y="547.500"/>

                <g fill="#fff" stroke="#222">
                  <path d="M385 393.500H457" stroke="#bbb" fill="none"/>
                  <path d="M380.500 393.500H385.500V408H390.500V445H384.500V408.500H380.500Z"/>
                  <path d="M462.500 393.500H457.500V408H452.500V445H458.500V408.500H462.500Z"/>
                  <path d="M390 444Q414 436 421 406Q428 436 452 444" fill="none"/>
                </g>

                <g>
                  <use href="#col" x="905" y="288"/>
                  <rect x="898" y="281" width="14" height="14" fill="#fff"/>
                  <path d="M898 281L912 295M912 281L898 295" stroke="#222" stroke-width=".8"/>
                  <g fill="#fff" stroke="#1e7ef0" stroke-width="1">
                    <rect x="890.500" y="273.500" width="8" height="8"/><rect x="901.500" y="273.500" width="8" height="8"/><rect x="911.500" y="273.500" width="8" height="8"/>
                    <rect x="890.500" y="284.500" width="8" height="8"/><rect x="911.500" y="284.500" width="8" height="8"/>
                    <rect x="890.500" y="295.500" width="8" height="8"/><rect x="901.500" y="295.500" width="8" height="8"/><rect x="911.500" y="295.500" width="8" height="8"/>
                    <circle cx="905.300" cy="260.300" r="5" stroke="#3b97f5"/>
                  </g>
                </g>
              </g>
            </svg>
          </div>
        </div>
        <div class="hscroll"><span></span></div>
      </div>
      <div class="vscroll"><span></span></div>
    </div>

    <div class="palette">
      <svg class="ico fillbtn" width="16" height="15" viewBox="0 0 16 15"><path d="M8 1L4 7Q3 11 8 12Q13 11 12 7Z" fill="none" stroke="#444" stroke-width="1.600"/><path d="M4 8H12L8 12Z" fill="#444"/></svg>
      <div class="swatches">
        <i style="background:#ffffff"></i><i style="background:#eeeeee"></i><i style="background:#dcdcdc"></i><i style="background:#cdd0cd"></i><i style="background:#b0b3b1"></i><i style="background:#9a9c9a"></i><i style="background:#858585"></i><i style="background:#6f6f6f"></i><i style="background:#595959"></i><i style="background:#403b39"></i><i style="background:#000000"></i><i style="background:#cdd8cc"></i><i style="background:#d8d0c8"></i><i style="background:#e0b988"></i><i style="background:#b18a6b"></i><i style="background:#c0793d"></i><i style="background:#a95526"></i><i style="background:#914f2b"></i><i style="background:#783c2d"></i><i style="background:#5a2a1b"></i><i style="background:#ecc2da"></i><i style="background:#c9a7cc"></i><i style="background:#a996cf"></i><i style="background:#cb7fb0"></i><i style="background:#a05c8d"></i><i style="background:#97669f"></i><i style="background:#76559d"></i><i style="background:#673f97"></i><i style="background:#833e85"></i><i style="background:#7a3075"></i><i style="background:#fde7d0"></i><i style="background:#fddcab"></i><i style="background:#ecc992"></i><i style="background:#fed26c"></i><i style="background:#fef27c"></i><i style="background:#fff200"></i><i style="background:#ffd800"></i><i style="background:#fbc72a"></i><i style="background:#fbb72a"></i><i style="background:#ffb400"></i><i style="background:#f8b300"></i><i style="background:#f6a055"></i><i style="background:#f48400"></i><i style="background:#ee7000"></i><i style="background:#e5521d"></i><i style="background:#cfe3c1"></i><i style="background:#c2d944"></i><i style="background:#a8d168"></i><i style="background:#80ba10"></i><i style="background:#00b14f"></i><i style="background:#45bc82"></i><i style="background:#1ccbb0"></i><i style="background:#50bdbd"></i><i style="background:#00aea0"></i><i style="background:#1e9440"></i><i style="background:#007c4d"></i><i style="background:#596b2e"></i><i style="background:#00686b"></i><i style="background:#005833"></i><i style="background:#003f3a"></i><i style="background:#c9e7f5"></i><i style="background:#a4d4ee"></i><i style="background:#92c5ec"></i><i style="background:#33ccff"></i><i style="background:#06b6f2"></i><i style="background:#2ba9e1"></i><i style="background:#0584d0"></i><i style="background:#4f86c6"></i><i style="background:#3f67b1"></i><i style="background:#0068a8"></i><i style="background:#0b4d92"></i><i style="background:#432e7a"></i><i style="background:#2a3578"></i><i style="background:#0f2556"></i><i style="background:#fde1e8"></i><i style="background:#fdd5e3"></i><i style="background:#e9d4e8"></i><i style="background:#f7bfbc"></i><i style="background:#f3ab97"></i><i style="background:#fd9d7c"></i><i style="background:#f59097"></i><i style="background:#f18d8d"></i><i style="background:#e79ab5"></i><i style="background:#e95f9d"></i><i style="background:#ee6e77"></i><i style="background:#ee5a69"></i><i style="background:#c94f75"></i><i style="background:#d90a22"></i><i style="background:#b20416"></i>
      </div>
    </div>
  </div>

  <div class="sidebar">
    <div class="sidehead"><svg class="ico dim-i" width="14" height="14" viewBox="0 0 14 14"><path d="M2 1L7 7L2 13M8 1L13 7L8 13"/></svg></div>
    <div class="si active"><svg class="ico" width="24" height="24" viewBox="0 0 24 24"><path d="M13 2L11 6M4 12L12 5L20 12L12 20Z" fill="none" stroke="#fff" stroke-width="2"/><path d="M4 12H20L12 20Z" fill="#fff"/><circle cx="5" cy="20" r="1.800" fill="#fff"/></svg></div>
    <div class="si"><svg class="ico dk" width="20" height="20" viewBox="0 0 20 20"><g stroke-width="2"><rect x="11" y="11" width="7" height="7"/><rect x="2" y="11" width="7" height="7"/><rect x="11" y="2" width="7" height="6"/><path d="M2 8V2H9" stroke-dasharray="3 1"/></g></svg></div>
    <div class="si"><svg class="ico dk" width="20" height="20" viewBox="0 0 20 20"><rect x="2" y="3" width="16" height="14" stroke-width="2"/><path d="M3 16V12L7 9L10 12L13 9L17 13V16Z" fill="#444" stroke="none"/><circle cx="14" cy="7" r="1" fill="#444"/></svg></div>
    <div class="si"><svg class="ico dk" width="20" height="20" viewBox="0 0 20 20"><path d="M10 2L18 8L10 13L2 8Z" stroke-width="2"/><path d="M2 12L10 18L18 12" stroke-width="2"/></svg></div>
    <div class="si"><svg class="ico dk" width="20" height="20" viewBox="0 0 20 20"><path d="M7 2H17V18H3V6Z" stroke-width="2"/><path d="M6 9H14M6 12H14M6 15H14" stroke-dasharray="7 1"/></svg></div>
    <div class="si"><svg class="ico dk" width="20" height="20" viewBox="0 0 20 20"><path d="M2 3V18H18" stroke-width="1.600"/><path d="M4 14L8 9L12 13L17 7"/><circle cx="8" cy="8.500" r="1.500" fill="#444"/><circle cx="12" cy="13" r="1.500" fill="#444"/><circle cx="17" cy="7" r="1.500" fill="#444"/></svg></div>
    <div class="si"><svg class="ico dk" width="20" height="20" viewBox="0 0 20 20"><rect x="2" y="3" width="16" height="14" stroke-width="2"/><path d="M2 8H18M2 12.500H18M7.500 3V17M12.500 3V17" stroke-width="1.500"/></svg></div>
    <div class="si"><svg class="ico dk" width="20" height="20" viewBox="0 0 20 20"><rect x="2" y="8" width="8" height="10" stroke-width="2"/><rect x="10" y="11" width="8" height="7" stroke-width="2"/><rect x="7" y="2" width="8" height="6" stroke-width="2"/></svg></div>
    <div class="si"><svg class="ico dk" width="20" height="20" viewBox="0 0 20 20"><path d="M2 4H18M2 8H18" stroke-width="2"/><path d="M4 8V15H8V18H4" stroke-width="2"/></svg></div>
    <div class="si"><svg class="ico dk" width="20" height="20" viewBox="0 0 20 20"><path d="M6 6L14 14M14 6L6 14" stroke-width="2"/><rect x="2" y="2" width="4" height="4" fill="#444"/><rect x="14" y="2" width="4" height="4" fill="#444"/><rect x="2" y="14" width="4" height="4" fill="#444"/><rect x="14" y="14" width="4" height="4" fill="#444"/></svg></div>
  </div>
</main>

<footer class="statusbar">
  <svg class="ico dk st-a" width="20" height="18" viewBox="0 0 20 18"><path d="M1 1V17M19 1V17"/><rect x="4" y="3" width="12" height="12" stroke-width="2.200"/></svg>
  <span class="pg st-b">Page-1</span>
  <i class="caret st-c"></i>
  <span class="vsep"></span>
  <b class="pg cur">Page-1</b>
  <svg class="ico dk st-d" width="12" height="12" viewBox="0 0 12 12"><path d="M6 1V11M1 6H11" stroke-width="1.800"/></svg>
  <span class="shapeid">形状 ID: 3721</span>
  <svg class="ico dk st-e" width="18" height="18" viewBox="0 0 18 18"><circle cx="9" cy="9" r="7" stroke-width="1.800"/><path d="M11.500 5V13L5.500 9Z" fill="#444" stroke="none"/></svg>
  <span class="dash"></span>
  <span class="slider"><span class="knob"></span></span>
  <svg class="ico dk st-f" width="12" height="12" viewBox="0 0 12 12"><path d="M6 1V11M1 6H11" stroke-width="1.800"/></svg>
  <span class="zoomv">70%</span>
  <i class="caret st-g"></i>
  <svg class="ico dk st-h" width="16" height="16" viewBox="0 0 16 16"><path d="M1 5V1H5M11 1H15V5M1 11V15H5M11 15H15V11" stroke-width="1.800"/></svg>
  <svg class="ico dk st-i" width="16" height="16" viewBox="0 0 16 16"><rect x="1" y="1" width="14" height="14" stroke-width="1.800"/><path d="M4 8H12M4 8L6 6M4 8L6 10M12 8L10 6M12 8L10 10"/></svg>
</footer>

</div>
</body>
</html>
```
FILE: styles.css
```css
* { box-sizing: border-box; }
html, body { margin: 0; height: 100%; overflow: hidden; background: #f5f5f5; }
body { font-family: "Noto Sans CJK SC", "Noto Sans", "Liberation Sans", sans-serif; font-size: 12px; color: #222; }

/* The whole application window is shown mirrored left-to-right. */
.app { width: 1366px; height: 723px; display: flex; flex-direction: column; transform: scaleX(-1); overflow: hidden; position: relative; }

/* Icons are authored as seen in the picture, so they flip back. */
.ico { transform: scaleX(-1); flex: none; display: block; }
.wh { fill: none; stroke: #fff; stroke-width: 1; }
.dk { fill: none; stroke: #444; stroke-width: 1.800; }
.lt { fill: none; stroke: #aaa; stroke-width: 1.800; }
.dim-i { fill: none; stroke: #777; stroke-width: 1.100; }
.sh { fill: none; stroke: #555; stroke-width: .8; }
.dimt { font: 4.500px "Liberation Sans", sans-serif; fill: #999; stroke: none; text-anchor: middle; }

.caret { display: block; flex: none; width: 0; height: 0; border-left: 3px solid transparent; border-right: 3px solid transparent; border-top: 4px solid #666; }
.caret.w { border-top-color: #fff; }
.caret.lt2 { border-top-color: #bbb; }

/* Title bar */
.titlebar { height: 26px; background: #0a77ea; display: grid; grid-template-columns: 1fr auto 1fr; align-items: center; color: #fff; }
.qa { display: flex; align-items: center; padding-left: 10px; }
.a1 { margin-left: 19px; margin-right: 3px; }
.a2 { margin-left: 15px; }
.a3 { margin-left: 15px; }
.a4 { margin-left: 12px; }
.qa .a3 + .caret { margin-left: 4px; }
.apptitle { font-size: 13px; }
.winctl { display: flex; align-items: center; justify-content: flex-end; gap: 23px; padding-right: 13px; }
.minbtn { width: 6px; height: 3px; background: #fff; margin-top: 3px; }

/* Menu bar */
.menubar { height: 26px; background: #0a77ea; display: flex; align-items: flex-end; color: #fff; }
.tab { height: 24px; display: flex; align-items: center; justify-content: center; font-size: 13px; }
.t74 { width: 74px; } .t79 { width: 79px; } .t80 { width: 80px; } .t84 { width: 84px; } .t104 { width: 104px; }
.tab.on { background: #f5f5f5; color: #222; border-radius: 2px 2px 0 0; }
.menuright { flex: 1; height: 26px; display: flex; align-items: center; padding-left: 559px; }
.m1 { margin-left: 18px; }
.vipname { margin-left: 11px; width: 25px; white-space: nowrap; font-size: 12px; }
.gem { margin-left: 1px; }
.m2 { margin-left: 2px; }
.m3 { margin-left: 7px; }
.m4 { margin-left: 3px; }
.m5 { margin-left: 16px; }
.m6 { margin-left: 20px; }

/* Ribbon */
.ribbon { height: 83px; background: #f5f5f5; border-bottom: 1px solid #d9d9d9; display: flex; align-items: flex-start; }
.grp { height: 57px; margin-top: 14px; border-right: 1px solid #c4c4c4; flex: none; }
.clip { width: 87px; display: grid; grid-template-columns: 39px 39px; grid-auto-rows: 35px; padding-left: 17px; }
.pastecell { display: flex; align-items: center; gap: 3px; height: 22px; }
.font { width: 405px; display: flex; flex-direction: column; gap: 10px; }
.frow { height: 24px; display: flex; align-items: center; padding-left: 18px; }
.frow.second { padding-left: 9px; }
.select { height: 24px; background: #fff; border: 1px solid #dcdcdc; border-radius: 3px; display: flex; align-items: center; justify-content: space-between; padding: 0 8px 0 12px; flex: none; font-size: 12px; color: #111; }
.fontsel { width: 196px; margin-right: 8px; }
.sizesel { width: 61px; padding-right: 6px; }
.p1 { margin-left: 16px; width: 20px; }
.p2 { margin-left: 17px; width: 20px; }
.p3 { margin-left: 14px; }
.p4 { margin-left: 3px; }
.glyph { font-family: "Liberation Sans", sans-serif; font-size: 16px; color: #444; line-height: 1; }
.glyph sup, .glyph sub { font-size: 9px; line-height: 0; }
.big { font-size: 17px; }
.bold { font-weight: 700; font-size: 17px; }
.ital { font-family: "Liberation Serif", serif; font-style: italic; font-weight: 700; font-size: 18px; }
.under { text-decoration: underline; }
.strike { text-decoration: line-through; }
.ab { font-weight: 700; }
.fi { width: 35px; flex: none; display: flex; justify-content: center; align-items: center; }
.fc { width: 37.500px; flex: none; display: flex; align-items: center; gap: 4px; padding-left: 4px; }
.fc .glyph { width: 18px; text-align: center; }

.tools { width: 220px; padding-left: 10px; display: flex; }
.second-tools { width: 269px; }
.tool { width: 50px; height: 61px; margin-top: -1px; display: flex; flex-direction: column; align-items: center; flex: none; padding-top: 3px; font-size: 12px; color: #333; }
.tool svg { margin-bottom: 7px; height: 24px; }
.tool span { line-height: 16px; white-space: nowrap; }
.tool .caret { margin-top: 1px; }
.tool.active { background: #e3e3e3; }
.tool.off { color: #bbb; }
.single { width: 52px; display: flex; justify-content: center; }
.single .tool .caret { margin-top: 3px; }

/* Main region */
.main { height: 557px; display: flex; }

/* Symbol panel */
.panel { width: 209px; flex: none; border-right: 1px solid #c9c9c9; background: #f5f5f5; display: flex; flex-direction: column; overflow: hidden; }
.panelhead { height: 26px; display: flex; align-items: center; justify-content: space-between; padding: 0 14px 0 5px; flex: none; }
.paneltitle { font-size: 13px; color: #222; }
.searchrow { height: 26px; margin-top: 6px; display: flex; align-items: center; padding-left: 12px; flex: none; }
.s1 { margin-left: 3px; }
.searchbox { width: 140px; height: 26px; margin-left: 1px; border: 1px solid #ddd; border-radius: 3px; display: flex; align-items: center; justify-content: space-between; padding: 0 6px 0 8px; color: #777; font-size: 12px; background: #f4f4f4; }
.updown { margin-left: 6px; display: flex; flex-direction: column; gap: 5px; }
.ub { width: 19px; height: 11px; padding: 0; background: #f5f5f5; border: 1px solid #ddd; border-radius: 3px; display: flex; align-items: center; justify-content: center; }
.libwrap { flex: 1; min-height: 0; margin-top: 10px; display: flex; }
.libs { width: 200px; flex: none; overflow: hidden; }
.libscroll { width: 8px; background: #ececec; }
.libscroll span { display: block; height: 32px; background: #d4d4d4; border-radius: 4px; }
.libhead { height: 35px; background: #e0e0e0; display: flex; align-items: center; padding: 0 6px 0 9px; color: #111; font-size: 12px; }
.tri { width: 0; height: 0; border-left: 5px solid transparent; border-right: 5px solid transparent; border-top: 6px solid #666; margin-right: 5px; }
.libx { margin-left: auto; font-style: normal; font-size: 13px; color: #777; }
.libgrid { display: grid; grid-template-columns: repeat(4, 49px); grid-auto-rows: 48px; padding: 6px 0; height: 348px; }
.libgrid.g2 { height: auto; padding: 8px 0 0; }

/* Centre */
.center { width: 1124px; flex: none; display: flex; flex-direction: column; }
.tabstrip { height: 26px; background: #f5f5f5; border-top: 1px solid #ddd; flex: none; }
.doctab { width: 160px; height: 25px; background: #bfbfbf; display: flex; align-items: center; padding: 0 0 0 12px; color: #0a84ff; font-size: 12px; }
.doctab span { margin-left: 9px; font-size: 11.500px; white-space: nowrap; }
.docx { margin-left: 58px; font-style: normal; font-size: 13px; color: #666; }
.work { height: 516px; display: flex; flex: none; }
.vruler { width: 17px; flex: none; display: flex; flex-direction: column; background: #fafafa; overflow: hidden; }
.corner { height: 16px; background: #ededed; flex: none; border-bottom: 1px solid #ddd; }
.vticks { padding-top: 17px; }
.vticks span { display: block; height: 53px; border-top: 1px solid #ccc; writing-mode: vertical-rl; font: 10px "Liberation Sans", sans-serif; color: #666; padding: 2px 3px 0 0; line-height: 12px;
  background-image: linear-gradient(#ccc 1px, transparent 1px); background-size: 5px 13.250px; background-repeat: repeat-y; background-position: left top; }
.mid { width: 1094px; flex: none; display: flex; flex-direction: column; }
.hruler { height: 16px; flex: none; padding-left: 13px; display: flex; overflow: hidden; background: #fafafa; border-bottom: 1px solid #d9d9d9; }
.hruler span { width: 53px; flex: none; border-left: 1px solid #ccc; padding-left: 1px; font: 10px/12px "Liberation Sans", sans-serif; color: #667;
  background-image: linear-gradient(90deg, #ccc 1px, transparent 1px); background-size: 13.250px 6px; background-repeat: repeat-x; background-position: left bottom; }
.canvas { height: 486px; flex: none; background: #e4e4e4; padding-left: 119px; overflow: hidden; }
.page { width: 784px; height: 486px; background: #fff; outline: 1px solid #b5b5b5; }
.plan { display: block; }
.hscroll { height: 14px; flex: none; background: #fff; border-top: 1px solid #e2e2e2; border-bottom: 1px solid #e2e2e2; padding: 1px 0 1px 110px; }
.hscroll span { display: block; width: 898px; height: 10px; background: #bdbdbd; border-radius: 5px; }
.vscroll { width: 13px; flex: none; background: #f5f5f5; padding: 96px 1px 0; }
.vscroll span { display: block; height: 298px; background: #bdbdbd; border-radius: 5px; width: 11px; }
.palette { height: 15px; flex: none; display: flex; align-items: center; background: #f5f5f5; }
.fillbtn { margin: 0 6px; }
.swatches { flex: 1; height: 15px; display: flex; flex-direction: row-reverse; gap: 1px; }
.swatches i { flex: 1; display: block; }

/* Left-hand strip in the picture */
.sidebar { width: 33px; flex: none; border-left: 1px solid #c9c9c9; background: #f5f5f5; }
.sidehead { height: 32px; display: flex; align-items: center; justify-content: center; }
.si { height: 34px; margin-bottom: 10px; display: flex; align-items: center; justify-content: center; }
.si.active { background: #0a84ff; }

/* Status bar */
.statusbar { height: 31px; flex: none; background: #f5f5f5; border-top: 1px solid #d6d6d6; display: flex; align-items: center; padding-left: 20px; color: #333; }
.pg { font: 11px "DejaVu Sans", sans-serif; white-space: nowrap; }
.st-b { margin-left: 26px; }
.st-c { margin-left: 54px; }
.vsep { width: 1px; height: 24px; background: #ccc; margin-left: 7px; }
.cur { margin-left: 17px; font-weight: 700; font-size: 11px; color: #111; }
.st-d { margin-left: 26px; }
.shapeid { margin-left: 716px; width: 80px; white-space: nowrap; letter-spacing: .4px; }
.st-e { margin-left: 17px; }
.dash { width: 10px; height: 2px; background: #444; margin-left: 6px; }
.slider { width: 82px; height: 4px; margin-left: 7px; background: #e0e0e0; border-radius: 2px; position: relative; }
.slider::before { content: ""; position: absolute; left: 0; top: 0; width: 17px; height: 4px; background: #bbb; border-radius: 2px; }
.knob { position: absolute; left: 12px; top: -3px; width: 10px; height: 10px; background: #fff; border: 1.500px solid #bbb; border-radius: 50%; }
.st-f { margin-left: 6px; }
.zoomv { margin-left: 14px; width: 26px; }
.st-g { margin-left: 10px; }
.st-h { margin-left: 18px; }
.st-i { margin-left: 8px; }
```
